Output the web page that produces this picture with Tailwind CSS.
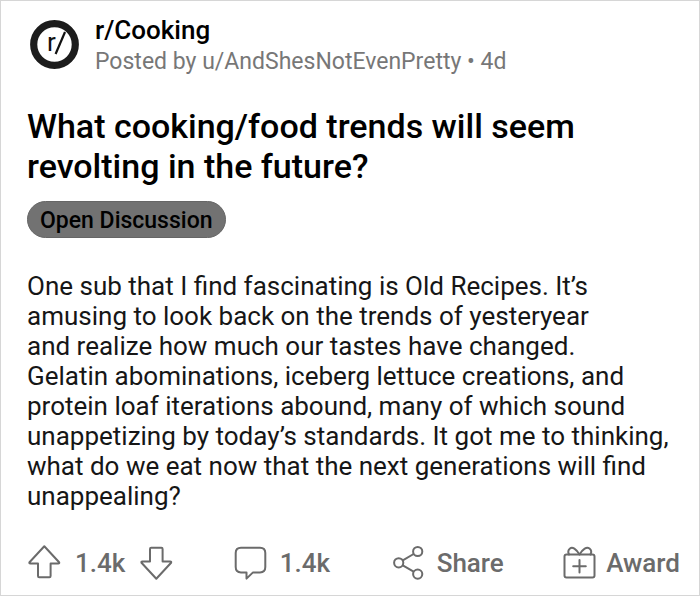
<!DOCTYPE html>
<html lang="en">
<head>
<meta charset="utf-8">
<meta name="viewport" content="width=device-width, initial-scale=1">
<title>r/Cooking</title>
<script src="https://cdn.jsdelivr.net/npm/@tailwindcss/browser@4"></script>
</head>
<body class="bg-white font-[Roboto,sans-serif] text-black">
<article class="flex min-h-screen flex-col border border-[#d6d6d6] pl-[26px] pr-[19px] pt-[13px] pb-[14px]">
  <header class="flex items-start gap-4">
    <svg class="mt-[6px] ml-[3px] size-[49px] shrink-0" viewBox="0 0 49 49" role="img" aria-label="Subreddit icon">
      <circle cx="24.5" cy="24.5" r="20.8" fill="none" stroke="#1c1c1c" stroke-width="7.2"/>
      <text x="17" y="31" font-family="Roboto" font-size="26" fill="#111">r</text>
      <path d="M35 12 25.6 34" stroke="#111" stroke-width="2.2"/>
    </svg>
    <div>
      <a href="#" class="block text-[26px] leading-8 font-medium">r/Cooking</a>
      <p class="text-[23px] leading-8 text-[#777]">Posted by <a href="#">u/AndShesNotEvenPretty</a> • 4d</p>
    </div>
  </header>
  <h1 class="mt-7 text-[34px] leading-10 font-medium">What cooking/food trends will seem revolting in the future?</h1>
  <a href="#" class="mt-[15px] flex h-[37px] items-center self-start rounded-full border border-[#666] bg-[#727272] px-3 pt-[3px] text-[23px] leading-8 font-medium">Open Discussion</a>
  <p class="mt-[33px] text-[26px] leading-[30px] text-[#161616]">One sub that I find fascinating is Old Recipes. It’s<br>amusing to look back on the trends of yesteryear<br>and realize how much our tastes have changed.<br>Gelatin abominations, iceberg lettuce creations, and<br>protein loaf iterations abound, many of which sound<br>unappetizing by today’s standards. It got me to thinking,<br>what do we eat now that the next generations will find<br>unappealing?</p>
  <footer class="mt-auto flex items-center justify-between text-[26px] leading-9 font-medium text-[#6b6b6b]">
    <div class="flex items-center gap-3">
      <button aria-label="Upvote"><svg class="size-9" viewBox="0 0 36 36" fill="none" stroke="currentColor" stroke-width="2" stroke-linejoin="round"><path d="M17.3 1.2 2.5 17.2Q2 18.4 3.3 18.4H11V31Q11 32.2 12.2 32.2H22.4Q23.6 32.2 23.6 31V18.4H31.3Q32.6 18.4 32.1 17.2Z"/></svg></button>
      <span>1.4k</span>
      <button aria-label="Downvote"><svg class="size-9" viewBox="0 0 36 36" fill="none" stroke="currentColor" stroke-width="2" stroke-linejoin="round"><path d="M19.3 33.8 4.5 17.8Q4 16.6 5.3 16.6H13V4Q13 2.8 14.2 2.8H24.4Q25.6 2.8 25.6 4V16.6H33.3Q34.6 16.6 34.1 17.8Z"/></svg></button>
    </div>
    <button class="flex items-center gap-3">
      <svg class="size-9" viewBox="0 0 36 36" fill="none" stroke="currentColor" stroke-width="2" stroke-linejoin="round"><path d="M9 2.7H28Q33.3 2.7 33.3 8V22Q33.3 27.4 28 27.4H21L14.5 33.6V27.4H9Q3.7 27.4 3.7 22V8Q3.7 2.7 9 2.7Z"/></svg>
      1.4k
    </button>
    <button class="flex items-center gap-3">
      <svg class="size-9" viewBox="0 0 36 36" fill="none" stroke="currentColor" stroke-width="2"><circle cx="28.7" cy="6.5" r="4.6"/><circle cx="9.7" cy="17.8" r="4.6"/><circle cx="28.7" cy="29.1" r="4.6"/><path d="M13.8 15.3 24.6 9M13.8 20.3 24.6 26.6"/></svg>
      Share
    </button>
    <button class="flex items-center gap-2">
      <svg class="size-9" viewBox="0 0 36 36" fill="none" stroke="currentColor" stroke-width="2" stroke-linecap="round" stroke-linejoin="round"><rect x="2.5" y="9.5" width="30" height="23" rx="2"/><path d="M17.5 9.5C14 4 10.5 1.5 8 3.5 5.5 5.5 6 7.5 7 9.5M17.5 9.5C21 4 24.5 1.5 27.5 3.5 30 5.5 29.5 7.5 28.5 9.5M17.5 15V27.5M11.2 21.3H23.8"/></svg>
      Award
    </button>
  </footer>
</article>
</body>
</html>
